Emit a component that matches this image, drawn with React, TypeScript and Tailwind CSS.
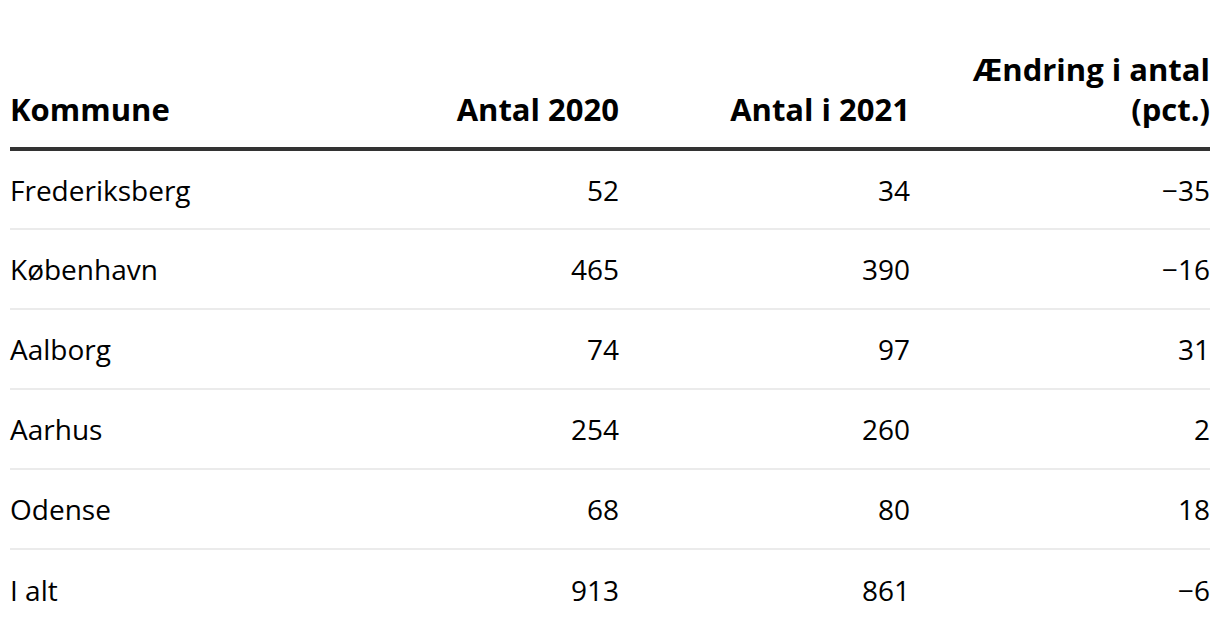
import React from "react";

const rows = [
  ["Frederiksberg", "52", "34", "\u221235"],
  ["København", "465", "390", "\u221216"],
  ["Aalborg", "74", "97", "31"],
  ["Aarhus", "254", "260", "2"],
  ["Odense", "68", "80", "18"],
  ["I alt", "913", "861", "\u22126"],
];

export default function App() {
  return (
    <div className="w-[1220px] h-[638px] bg-white px-[10px] pt-[49px] text-black" style={{ fontFamily: '"Open Sans", "Noto Sans", sans-serif' }}>
      <table className="w-[1200px] border-collapse table-fixed">
        <colgroup>
          <col className="w-[309px]" />
          <col className="w-[300px]" />
          <col className="w-[291px]" />
          <col className="w-[300px]" />
        </colgroup>
        <thead>
          <tr className="border-b-4 border-[#333]">
            <th className="text-left align-bottom font-bold text-[31px] leading-[40px] pb-[18px] p-0">Kommune</th>
            <th className="text-right align-bottom font-bold text-[31px] leading-[40px] pb-[18px] p-0">Antal 2020</th>
            <th className="text-right align-bottom font-bold text-[31px] leading-[40px] pb-[18px] p-0">Antal i 2021</th>
            <th className="text-right align-bottom font-bold text-[31px] leading-[40px] pb-[18px] p-0">
              Ændring i antal
              <br />
              (pct.)
            </th>
          </tr>
        </thead>
        <tbody>
          {rows.map((r, i) => (
            <tr key={i} className={i < rows.length - 1 ? "h-[80px] border-b-2 border-[#ebebeb]" : "h-[80px]"}>
              <td className="text-left text-[28px] p-0 align-middle">{r[0]}</td>
              <td className="text-right text-[28px] p-0 align-middle">{r[1]}</td>
              <td className="text-right text-[28px] p-0 align-middle">{r[2]}</td>
              <td className="text-right text-[28px] p-0 align-middle">{r[3]}</td>
            </tr>
          ))}
        </tbody>
      </table>
    </div>
  );
}
